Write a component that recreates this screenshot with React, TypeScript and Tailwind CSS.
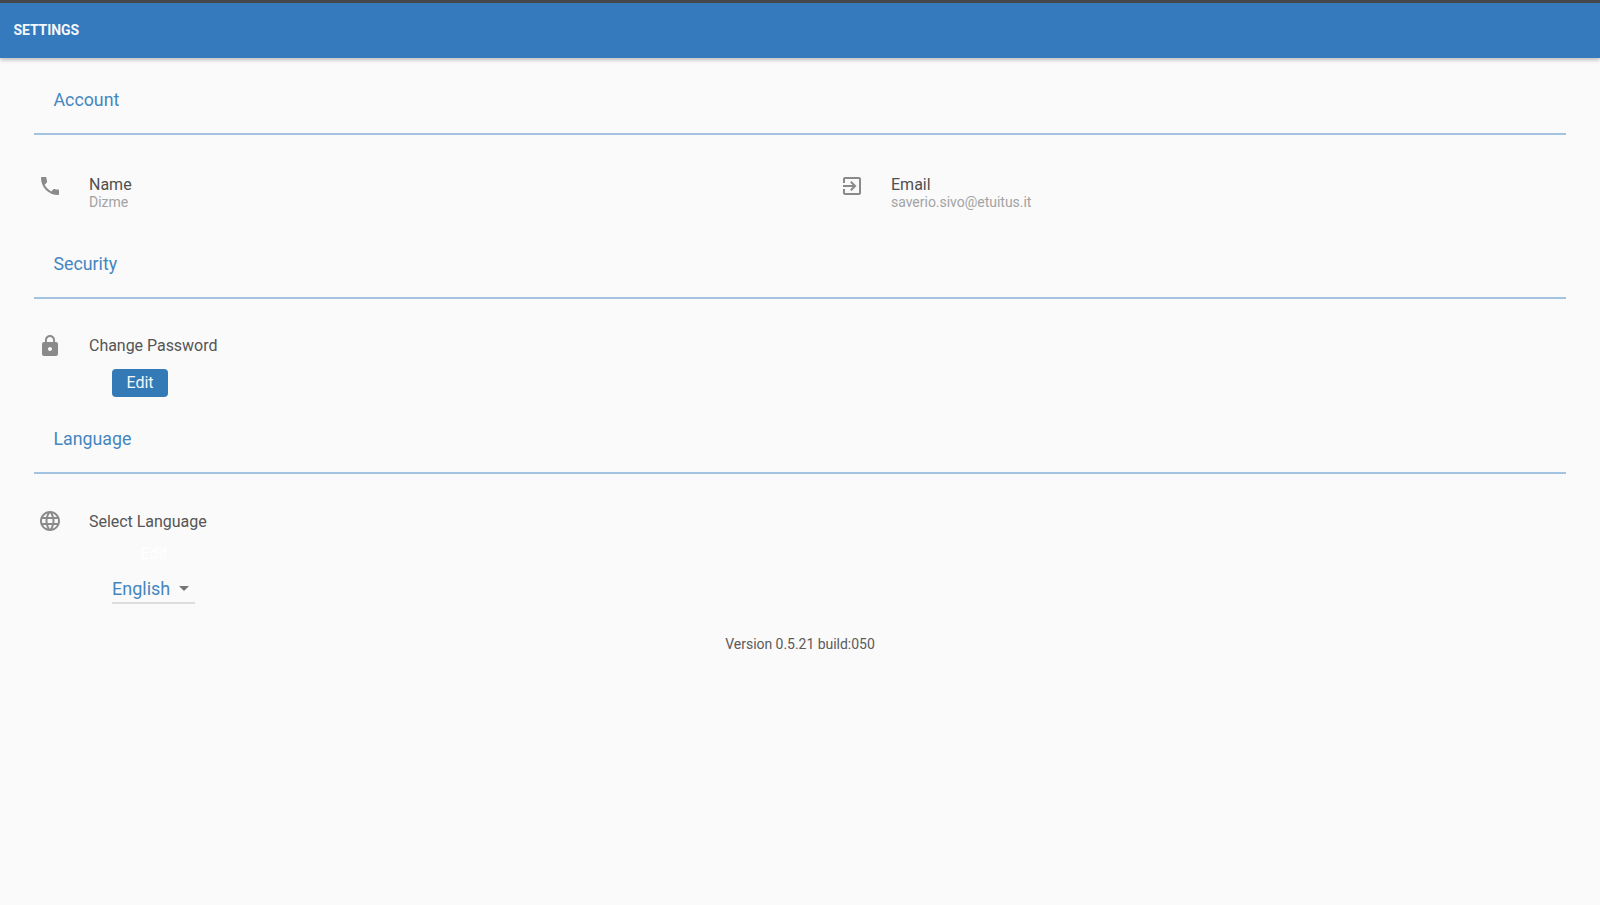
import React from "react";

const PHONE = "M6.62 10.79c1.44 2.83 3.76 5.14 6.59 6.59l2.2-2.2c.27-.27.67-.36 1.02-.24 1.12.37 2.33.57 3.57.57.55 0 1 .45 1 1V20c0 .55-.45 1-1 1-9.39 0-17-7.61-17-17 0-.55.45-1 1-1h3.5c.55 0 1 .45 1 1 0 1.25.2 2.45.57 3.57.11.35.03.74-.25 1.02l-2.2 2.2z";
const EXIT = "M10.09 15.59L11.5 17l5-5-5-5-1.41 1.41L12.67 11H3v2h9.67l-2.58 2.59zM19 3H5c-1.11 0-2 .9-2 2v4h2V5h14v14H5v-4H3v4c0 1.1.89 2 2 2h14c1.1 0 2-.9 2-2V5c0-1.1-.9-2-2-2z";
const LOCK = "M18 8h-1V6c0-2.76-2.24-5-5-5S7 3.24 7 6v2H6c-1.1 0-2 .9-2 2v10c0 1.1.9 2 2 2h12c1.1 0 2-.9 2-2V10c0-1.1-.9-2-2-2zm-6 9c-1.1 0-2-.9-2-2s.9-2 2-2 2 .9 2 2-.9 2-2 2zm3.1-9H8.9V6c0-1.71 1.39-3.1 3.1-3.1 1.71 0 3.1 1.39 3.1 3.1v2z";
const GLOBE = "M11.99 2C6.47 2 2 6.48 2 12s4.47 10 9.99 10C17.52 22 22 17.52 22 12S17.52 2 11.99 2zm6.93 6h-2.95c-.32-1.25-.78-2.45-1.38-3.56 1.84.63 3.37 1.91 4.33 3.56zM12 4.04c.83 1.2 1.48 2.53 1.91 3.96h-3.82c.43-1.43 1.08-2.76 1.91-3.96zM4.26 14C4.1 13.36 4 12.69 4 12s.1-1.36.26-2h3.38c-.08.66-.14 1.32-.14 2 0 .68.06 1.34.14 2H4.26zm.82 2h2.95c.32 1.25.78 2.45 1.38 3.56-1.84-.63-3.37-1.9-4.33-3.56zm2.95-8H5.08c.96-1.66 2.49-2.93 4.33-3.56C8.81 5.55 8.35 6.75 8.03 8zM12 19.96c-.83-1.2-1.48-2.53-1.91-3.96h3.82c-.43 1.43-1.08 2.76-1.91 3.96zM14.34 14H9.66c-.09-.66-.16-1.32-.16-2 0-.68.07-1.35.16-2h4.68c.09.65.16 1.32.16 2 0 .68-.07 1.34-.16 2zm.25 5.56c.6-1.11 1.06-2.31 1.38-3.56h2.95c-.96 1.65-2.49 2.93-4.33 3.56zM16.36 14c.08-.66.14-1.32.14-2 0-.68-.06-1.34-.14-2h3.38c.16.64.26 1.31.26 2s-.1 1.36-.26 2h-3.38z";

function Icon({ d, className = "" }: { d: string; className?: string }) {
  return (
    <svg viewBox="0 0 24 24" className={`w-6 h-6 shrink-0 fill-[#8a8a8a] ${className}`}>
      <path d={d} />
    </svg>
  );
}

function SectionTitle({ children, top }: { children: React.ReactNode; top: string }) {
  return (
    <div className={`mx-[34px] border-b-2 border-[#a3c3e0] pl-[19.5px] ${top}`}>
      <div className="text-[17.8px] leading-[24px] text-[#4586c0]">{children}</div>
    </div>
  );
}

export default function App() {
  return (
    <div className="min-h-[905px] bg-[#fafafa] font-['Roboto',sans-serif] overflow-hidden">
      <header className="h-[58px] bg-[#357abd] border-t-[3px] border-[#45484d] flex items-center pl-[13.5px] pb-[2px] shadow-[0_2px_4px_rgba(0,0,0,0.25)]">
        <h1 className="text-[14px] font-bold text-[#f4f8fb] leading-none tracking-[-0.1px]">SETTINGS</h1>
      </header>

      <SectionTitle top="pt-[30px] pb-[21px]">Account</SectionTitle>

      <div className="flex h-[91px] pt-[40.5px]">
        <div className="w-[802px] flex pl-[37.5px] gap-[27.5px]">
          <Icon d={PHONE} className="-mt-[2px]" />
          <div>
            <div className="text-[16px] leading-[18px] text-[#4f4f4f]">Name</div>
            <div className="text-[14px] leading-[17px] text-[#a3a3a3]">Dizme</div>
          </div>
        </div>
        <div className="flex pl-[37.5px] gap-[27.5px]">
          <Icon d={EXIT} className="-mt-[2px]" />
          <div>
            <div className="text-[16px] leading-[18px] text-[#4f4f4f]">Email</div>
            <div className="text-[14px] leading-[17px] text-[#a3a3a3] tracking-[-0.02px]">saverio.sivo@etuitus.it</div>
          </div>
        </div>
      </div>

      <SectionTitle top="pt-[26px] pb-[21px]">Security</SectionTitle>

      <div className="flex items-center pl-[37.5px] gap-[27.5px] pt-[29px] h-[65px]">
        <Icon d={LOCK} className="-mt-[1px]" />
        <div className="text-[16px] leading-[18px] text-[#555555] tracking-[-0.03px]">Change Password</div>
      </div>
      <div className="pl-[112px] pt-[5px]">
        <button className="w-[56px] h-[28px] rounded-[4px] bg-[#337ab7] text-[#f4f8fb] text-[16px] leading-none">Edit</button>
      </div>

      <SectionTitle top="pt-[30px] pb-[21px]">Language</SectionTitle>

      <div className="flex items-center pl-[37.5px] gap-[27.5px] pt-[30px] h-[65px]">
        <Icon d={GLOBE} className="-mt-[1px]" />
        <div className="text-[16px] leading-[18px] text-[#555555] tracking-[-0.03px]">Select Language</div>
      </div>
      <div className="pl-[112px]">
        <div className="w-[84px] text-center text-[16px] leading-[19px] text-white pt-[5px]">Edit</div>
        <div className="w-[83px] h-[41px] border-b-2 border-[#dddddd] flex items-center pt-[12px]">
          <span className="text-[18px] leading-[24px] text-[#4586c0]">English</span>
          <span className="ml-[9px] w-0 h-0 border-x-[5px] border-x-transparent border-t-[5px] border-t-[#757575]" />
        </div>
      </div>

      <div className="text-center text-[14px] leading-[18px] text-[#5a5a5a] pt-[31px] tracking-[-0.03px]">Version 0.5.21 build:050</div>
    </div>
  );
}
